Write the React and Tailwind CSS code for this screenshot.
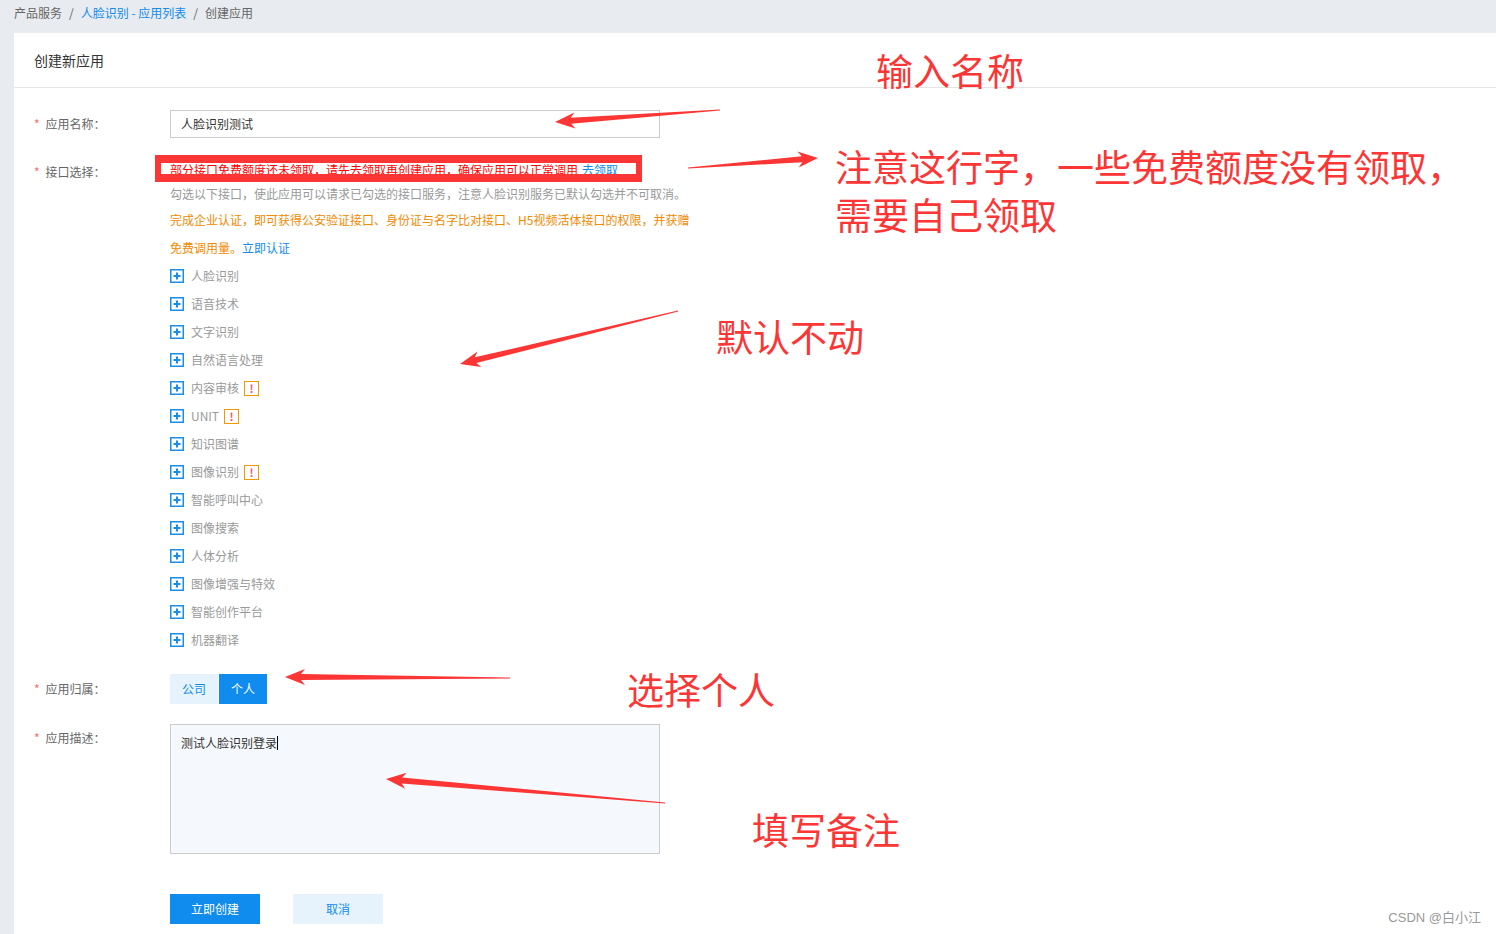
import React from "react";

const items = [
  { name: "人脸识别" },
  { name: "语音技术" },
  { name: "文字识别" },
  { name: "自然语言处理" },
  { name: "内容审核", warn: true },
  { name: "UNIT", warn: true },
  { name: "知识图谱" },
  { name: "图像识别", warn: true },
  { name: "智能呼叫中心" },
  { name: "图像搜索" },
  { name: "人体分析" },
  { name: "图像增强与特效" },
  { name: "智能创作平台" },
  { name: "机器翻译" },
];

// tapered arrow, tail -> head
function arrow(x1, y1, x2, y2) {
  const len = Math.hypot(x2 - x1, y2 - y1);
  const dx = (x2 - x1) / len;
  const dy = (y2 - y1) / len;
  const nx = -dy;
  const ny = dx;
  const L = 16;
  const bx = x2 - dx * L;
  const by = y2 - dy * L;
  const wx = x2 - dx * (L + 4);
  const wy = y2 - dy * (L + 4);
  const pts = [
    [x1 + nx * 0.5, y1 + ny * 0.5],
    [bx + nx * 3, by + ny * 3],
    [wx + nx * 8, wy + ny * 8],
    [x2, y2],
    [wx - nx * 8, wy - ny * 8],
    [bx - nx * 3, by - ny * 3],
    [x1 - nx * 0.5, y1 - ny * 0.5],
  ];
  return pts.map((p) => p[0].toFixed(1) + "," + p[1].toFixed(1)).join(" ");
}

function PlusBox() {
  return (
    <svg width="14" height="14" viewBox="0 0 14 14" className="shrink-0">
      <rect x="0.75" y="0.75" width="12.5" height="12.5" fill="white" stroke="#1a8cf0" strokeWidth="1.5" />
      <path d="M3.5 7h7M7 3.5v7" stroke="#1a8cf0" strokeWidth="2" />
    </svg>
  );
}

function Label({ children }) {
  return (
    <div className="w-[156px] shrink-0 pl-5 text-xs text-[#666] leading-7">
      <span className="text-[#f56c6c] mr-1.5">*</span>
      {children}
    </div>
  );
}

export default function App() {
  return (
    <div className="relative min-h-[934px] w-full overflow-hidden bg-[#e8ebf0] font-['Noto_Sans_CJK_SC',sans-serif]">
      {/* breadcrumb */}
      <div className="flex h-[33px] items-center gap-[7px] pl-[14px] pb-2 text-xs text-[#666]">
        <span>产品服务</span>
        <span>/</span>
        <span className="text-[#108cee]">人脸识别 - 应用列表</span>
        <span>/</span>
        <span>创建应用</span>
      </div>

      <div className="ml-[14px] min-h-[901px] bg-white">
        <div className="flex h-[55px] items-center border-b border-[#e4e4e4] pl-5 text-sm text-[#333]">
          创建新应用
        </div>

        <div className="flex flex-col gap-5 pt-[22px] pb-10">
          {/* name */}
          <div className="flex">
            <Label>应用名称：</Label>
            <div className="flex h-7 w-[490px] items-center border border-[#ccc] px-2.5 text-xs text-[#333]">
              人脸识别测试
            </div>
          </div>

          {/* apis */}
          <div className="flex">
            <Label>接口选择：</Label>
            <div className="flex flex-col text-xs">
              <div className="h-6 leading-6 text-[#ff0000]">
                部分接口免费额度还未领取，请先去领取再创建应用，确保应用可以正常调用
                <span className="ml-1 text-[#108cee]">去领取</span>
              </div>
              <div className="h-6 leading-6 text-[#999]">
                勾选以下接口，使此应用可以请求已勾选的接口服务，注意人脸识别服务已默认勾选并不可取消。
              </div>
              <div className="leading-7 text-[#f38900]">
                完成企业认证，即可获得公安验证接口、身份证与名字比对接口、H5视频活体接口的权限，并获赠
                <br />
                免费调用量。<span className="text-[#108cee]">立即认证</span>
              </div>
              <ul className="flex flex-col">
                {items.map((it) => (
                  <li key={it.name} className="flex h-7 items-center gap-[7px] text-[#999]">
                    <PlusBox />
                    <span>{it.name}</span>
                    {it.warn && (
                      <span className="-ml-0.5 flex h-[15px] w-[15px] items-center justify-center border border-[#f39800] text-[11px] font-bold leading-none text-[#f5536b]">
                        !
                      </span>
                    )}
                  </li>
                ))}
              </ul>
            </div>
          </div>

          {/* owner */}
          <div className="flex items-center">
            <Label>应用归属：</Label>
            <div className="flex gap-px text-xs">
              <button className="h-[30px] w-12 bg-[#e6f3fd] text-[#108cee]">公司</button>
              <button className="h-[30px] w-12 bg-[#108cee] text-white">个人</button>
            </div>
          </div>

          {/* desc */}
          <div className="flex">
            <Label>应用描述：</Label>
            <div className="h-[130px] w-[490px] border border-[#ccc] bg-[#f5f8fc] px-2.5 py-2 text-xs leading-5 text-[#333]">
              测试人脸识别登录
              <span className="inline-block h-[14px] w-px translate-y-[2px] bg-black" />
            </div>
          </div>

          {/* actions */}
          <div className="mt-5 flex gap-[33px] pl-[156px] text-xs">
            <button className="h-[30px] w-[90px] bg-[#108cee] text-white">立即创建</button>
            <button className="h-[30px] w-[90px] bg-[#e6f3fd] text-[#108cee]">取消</button>
          </div>
        </div>
      </div>

      {/* annotations drawn over the screenshot */}
      <div className="pointer-events-none absolute left-[155px] top-[155px] h-[27px] w-[487px] border-x-[6px] border-y-[8px] border-[#fc3535]" />
      <svg className="pointer-events-none absolute inset-0" width="1496" height="934">
        <g fill="#fc3535">
          <polygon points={arrow(720, 110, 555, 122)} />
          <polygon points={arrow(688, 168, 818, 158)} />
          <polygon points={arrow(678, 311, 460, 364)} />
          <polygon points={arrow(510, 678, 285, 677)} />
          <polygon points={arrow(665, 803, 386, 779)} />
        </g>
      </svg>
      <div className="pointer-events-none absolute left-[876px] top-[52px] text-[37px] leading-none text-[#fc3535]">输入名称</div>
      <div className="pointer-events-none absolute left-[835px] top-[142px] text-[37px] leading-[48px] text-[#fc3535]">
        注意这行字，一些免费额度没有领取，
        <br />
        需要自己领取
      </div>
      <div className="pointer-events-none absolute left-[716px] top-[318px] text-[37px] leading-none text-[#fc3535]">默认不动</div>
      <div className="pointer-events-none absolute left-[627px] top-[671px] text-[37px] leading-none text-[#fc3535]">选择个人</div>
      <div className="pointer-events-none absolute left-[752px] top-[811px] text-[37px] leading-none text-[#fc3535]">填写备注</div>

      <div className="absolute top-[908px] right-[15px] font-['Liberation_Sans','Noto_Sans_CJK_SC',sans-serif] text-[13px] leading-5 text-[#999]">
        CSDN @白小江
      </div>
    </div>
  );
}
